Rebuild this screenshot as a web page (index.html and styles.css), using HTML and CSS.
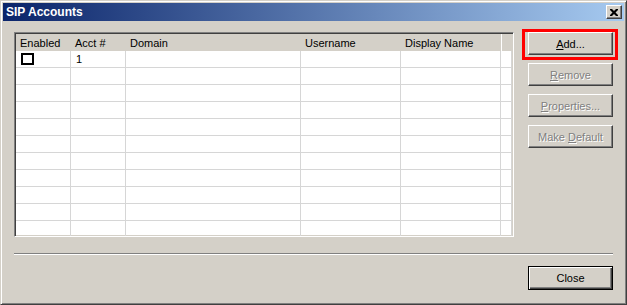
FILE: index.html
```html
<!DOCTYPE html>
<html lang="en">
<head>
    <meta charset="UTF-8">
    <title>SIP Accounts</title>
    <link rel="stylesheet" href="styles.css">
</head>
<body>
    <div class="window">
        <div class="titlebar">
            <span class="title">SIP Accounts</span>
            <button class="title-close" type="button">
                <svg width="8" height="7" viewBox="0 0 8 7">
                    <path d="M0 0h2l2 2 2-2h2v1l-2.5 2.5 2.5 2.5v1h-2l-2-2-2 2h-2v-1l2.5-2.5-2.5-2.5z" fill="#000"/>
                </svg>
            </button>
        </div>

        <div class="content">
            <div class="main">
                <div class="list">
                    <div class="row head">
                        <div class="cell">Enabled</div>
                        <div class="cell">Acct #</div>
                        <div class="cell">Domain</div>
                        <div class="cell">Username</div>
                        <div class="cell">Display Name</div>
                        <div class="cell"></div>
                    </div>
                    <div class="row">
                        <div class="cell"><span class="check"></span></div>
                        <div class="cell">1</div>
                        <div class="cell"></div>
                        <div class="cell"></div>
                        <div class="cell"></div>
                        <div class="cell"></div>
                    </div>
                    <div class="row"><div class="cell"></div><div class="cell"></div><div class="cell"></div><div class="cell"></div><div class="cell"></div><div class="cell"></div></div>
                    <div class="row"><div class="cell"></div><div class="cell"></div><div class="cell"></div><div class="cell"></div><div class="cell"></div><div class="cell"></div></div>
                    <div class="row"><div class="cell"></div><div class="cell"></div><div class="cell"></div><div class="cell"></div><div class="cell"></div><div class="cell"></div></div>
                    <div class="row"><div class="cell"></div><div class="cell"></div><div class="cell"></div><div class="cell"></div><div class="cell"></div><div class="cell"></div></div>
                    <div class="row"><div class="cell"></div><div class="cell"></div><div class="cell"></div><div class="cell"></div><div class="cell"></div><div class="cell"></div></div>
                    <div class="row"><div class="cell"></div><div class="cell"></div><div class="cell"></div><div class="cell"></div><div class="cell"></div><div class="cell"></div></div>
                    <div class="row"><div class="cell"></div><div class="cell"></div><div class="cell"></div><div class="cell"></div><div class="cell"></div><div class="cell"></div></div>
                    <div class="row"><div class="cell"></div><div class="cell"></div><div class="cell"></div><div class="cell"></div><div class="cell"></div><div class="cell"></div></div>
                    <div class="row"><div class="cell"></div><div class="cell"></div><div class="cell"></div><div class="cell"></div><div class="cell"></div><div class="cell"></div></div>
                    <div class="row"><div class="cell"></div><div class="cell"></div><div class="cell"></div><div class="cell"></div><div class="cell"></div><div class="cell"></div></div>
                </div>

                <div class="actions">
                    <button type="button" class="btn marked"><u>A</u>dd...</button>
                    <button type="button" class="btn" disabled><u>R</u>emove</button>
                    <button type="button" class="btn" disabled><u>P</u>roperties...</button>
                    <button type="button" class="btn" disabled>Make <u>D</u>efault</button>
                </div>
            </div>

            <div class="separator"></div>

            <div class="footer">
                <button type="button" class="btn default-btn">Close</button>
            </div>
        </div>
    </div>
</body>
</html>
```

FILE: styles.css
```css
* {
    box-sizing: border-box;
    margin: 0;
    padding: 0;
}
body {
    font-family: "Liberation Sans", Arial, sans-serif;
    font-size: 11px;
    color: #000;
    background: #d4d0c8;
}
.window {
    width: 627px;
    height: 305px;
    background: #d4d0c8;
    border: 1px solid;
    border-color: #d4d0c8 #404040 #404040 #d4d0c8;
    box-shadow: inset 1px 1px #fff, inset -1px -1px #808080;
    padding: 2px;
}
.titlebar {
    height: 18px;
    display: flex;
    align-items: center;
    justify-content: space-between;
    padding: 0 2px 0 2px;
    background: linear-gradient(to right, #0a246a, #a6caf0);
}
.title {
    color: #fff;
    font-weight: bold;
    font-size: 12px;
    padding-left: 1px;
}
.title-close {
    width: 16px;
    height: 14px;
    display: flex;
    align-items: center;
    justify-content: center;
    background: #d4d0c8;
    border: 1px solid;
    border-color: #fff #404040 #404040 #fff;
    box-shadow: inset -1px -1px #808080;
}
.content {
    padding: 11px 10px 0 11px;
}
.main {
    display: flex;
    align-items: flex-start;
}
.list {
    width: 500px;
    height: 205px;
    overflow: hidden;
    background: #fff;
    border: 1px solid;
    border-color: #808080 #fff #fff #808080;
    box-shadow: inset 1px 1px #404040, inset -1px -1px #d4d0c8;
    padding: 1px;
}
.row {
    display: grid;
    grid-template-columns: 55px 55px 175px 100px 100px 1fr;
    height: 17px;
}
.cell {
    border-right: 1px solid #d6d6d6;
    border-bottom: 1px solid #d6d6d6;
    padding-left: 5px;
    line-height: 16px;
    white-space: nowrap;
}
.row.head {
    background: #d4d0c8;
}
.row.head .cell {
    border: none;
    line-height: 18px;
    padding-left: 4px;
}
.row.head .cell:last-child {
    border-left: 1px solid #fff;
}
.check {
    display: inline-block;
    width: 13px;
    height: 12px;
    border: 2px solid #000;
    background: #fff;
    vertical-align: middle;
    margin-top: -2px;
}
.actions {
    display: flex;
    flex-direction: column;
    gap: 8px;
    margin-left: 14px;
}
.btn {
    width: 85px;
    height: 23px;
    font-family: "Liberation Sans", Arial, sans-serif;
    font-size: 11px;
    color: #000;
    background: #d4d0c8;
    border: 1px solid;
    border-color: #fff #404040 #404040 #fff;
    box-shadow: inset -1px -1px #808080;
}
.btn:disabled {
    color: #808080;
    text-shadow: 1px 1px #fff;
}
.marked {
    position: relative;
}
.marked::after {
    content: "";
    position: absolute;
    left: -7px;
    top: -4px;
    right: -6px;
    bottom: -6px;
    border: 3px solid #ff0000;
}
.separator {
    margin-top: 16px;
    height: 2px;
    width: 599px;
    border-top: 1px solid #808080;
    border-bottom: 1px solid #fff;
}
.footer {
    display: flex;
    justify-content: flex-end;
    margin-top: 11px;
    padding-right: 1px;
}
.default-btn {
    height: 24px;
    border: 1px solid #000;
    box-shadow: inset 1px 1px #fff, inset -1px -1px #404040, inset -2px -2px #808080;
}
```
